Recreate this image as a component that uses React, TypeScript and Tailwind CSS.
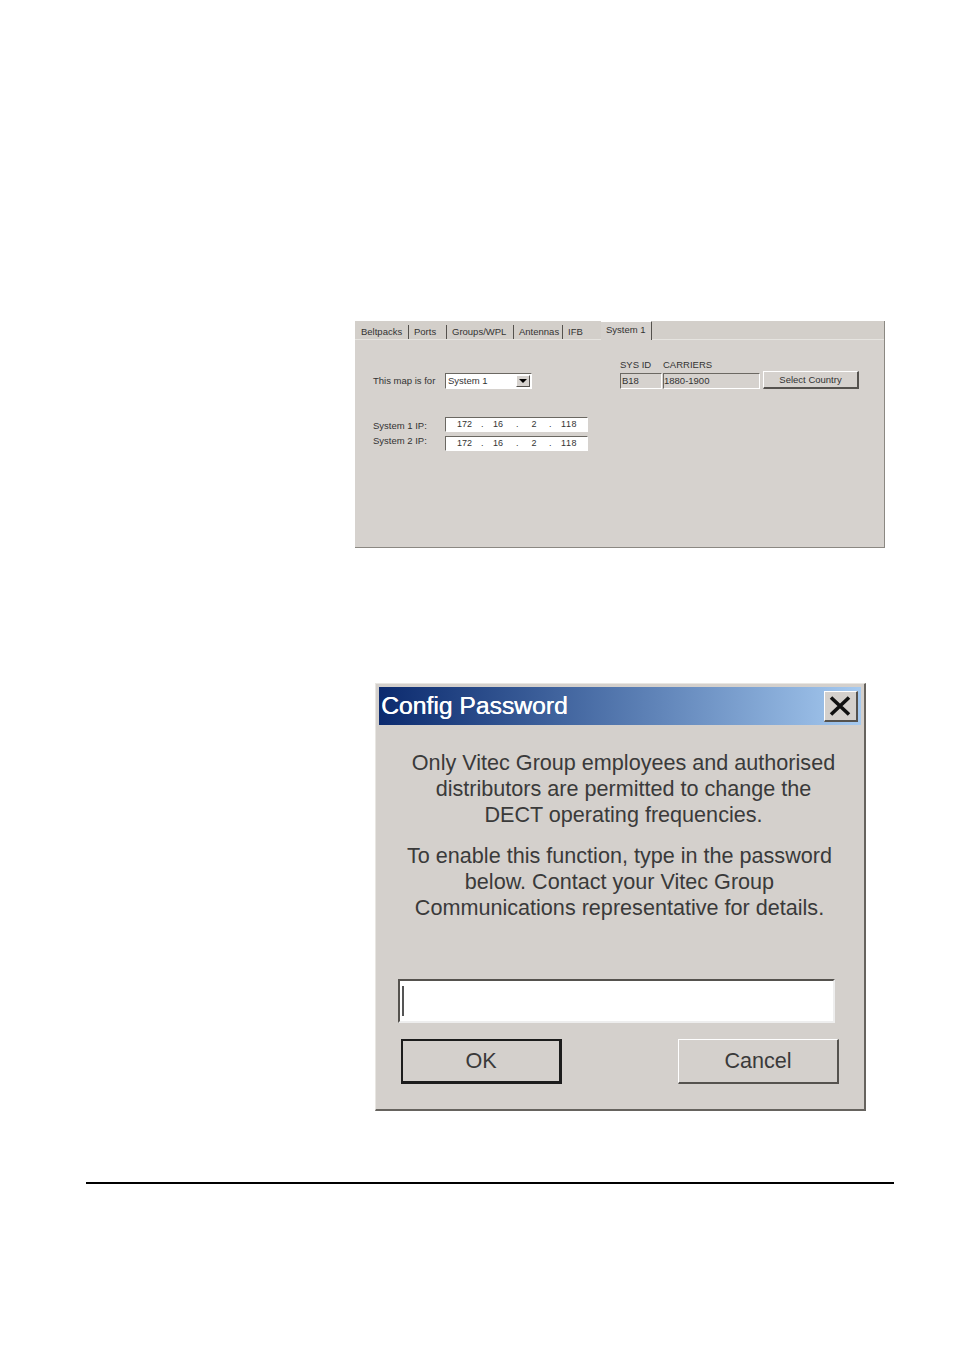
const raised = 'border border-t-white border-l-white border-r-[#55524e] border-b-[#55524e]'
const sunken = 'border border-t-[#6b6862] border-l-[#6b6862] border-r-white border-b-white'

const tabs = [
  { label: 'Beltpacks', width: 'w-[53px] border-r border-[#55524e]' },
  { label: 'Ports', width: 'w-[38px] border-r border-[#55524e]' },
  { label: 'Groups/WPL', width: 'w-[67px] border-r border-[#55524e]' },
  { label: 'Antennas', width: 'w-[49px] border-r border-[#55524e]' },
  { label: 'IFB', width: 'w-[38px]' },
]

function IpField() {
  return (
    <div className={`flex h-[15px] w-[143px] items-center bg-white pl-[11px] text-[9px] leading-none text-[#333] ${sunken}`}>
      <span className="w-[24px]">172</span>
      <span className="w-[12px]">.</span>
      <span className="w-[23px]">16</span>
      <span className="w-[12px]">.</span>
      <span className="w-[12px] text-center">2</span>
      <span className="w-[21px] pl-[9px]">.</span>
      <span className="tracking-[0.6px]">118</span>
    </div>
  )
}

function MapPanel() {
  return (
    <div className="ml-[355px] h-[227px] w-[530px] border-r border-b border-[#8b8882] bg-[#d6d2ce] font-['Liberation_Sans',sans-serif] text-[9.5px] text-[#333]">
      <div className="flex h-[19px] items-end border-b border-b-[#e6e4e0] bg-[#d3cfca] pl-[1px]">
        {tabs.map((tab) => (
          <div key={tab.label} className={`flex h-[14px] items-center pl-[5px] leading-none ${tab.width}`}>
            {tab.label}
          </div>
        ))}
        <div className="-mb-[1px] flex h-[19px] w-[51px] items-center self-start border-t border-r border-t-white border-r-[#55524e] bg-[#d6d2ce] pb-[2px] pl-[5px] leading-none">
          System 1
        </div>
      </div>

      <div className="flex pl-[18px]">
        <div className="w-[247px] pt-[33px]">
          <div className="flex h-[16px] items-center">
            <span className="w-[72px] leading-none">This map is for</span>
            <div className={`flex h-[16px] w-[87px] items-center justify-between bg-white pr-[1px] pl-[2px] ${sunken}`}>
              <span className="leading-none">System 1</span>
              <span className={`flex h-[12px] w-[14px] items-center justify-center bg-[#d6d2ce] ${raised}`}>
                <span className="h-0 w-0 border-x-[4px] border-t-[4px] border-x-transparent border-t-black" />
              </span>
            </div>
          </div>
          <div className="mt-[28px] flex items-start">
            <span className="w-[72px] pt-[4px] leading-none">System 1 IP:</span>
            <IpField />
          </div>
          <div className="mt-[4px] flex items-start">
            <span className="w-[72px] leading-none">System 2 IP:</span>
            <IpField />
          </div>
        </div>

        <div className="pt-[20px]">
          <div className="flex h-[13px] items-start leading-none">
            <span className="w-[43px]">SYS ID</span>
            <span>CARRIERS</span>
          </div>
          <div className="flex items-start">
            <div className={`flex h-[16px] w-[42px] items-center pl-[1px] leading-none ${sunken}`}>B18</div>
            <div className={`ml-[1px] flex h-[16px] w-[97px] items-center leading-none ${sunken}`}>1880-1900</div>
            <div className={`ml-[3px] -mt-[2px] flex h-[18px] w-[96px] items-center justify-center leading-none border-b-2 border-r-2 ${raised}`}>
              Select Country
            </div>
          </div>
        </div>
      </div>
    </div>
  )
}

function PasswordDialog() {
  return (
    <div className="ml-[375px] flex h-[428px] w-[491px] flex-col border border-t-[#e8e6e2] border-l-[#e8e6e2] border-r-2 border-b-2 border-r-[#66635e] border-b-[#66635e] bg-[#d4d0cc] p-[3px] font-['Liberation_Sans',sans-serif]">
      <div className="flex h-[38px] shrink-0 items-center justify-between bg-gradient-to-r from-[#0c2a6e] to-[#a6caf0] pr-[3px] pl-[2px]">
        <span className="text-[24.7px] font-medium leading-none text-white [text-shadow:0.4px_0_0_white]">Config Password</span>
        <span className={`flex h-[31px] w-[34px] items-center justify-center bg-[#d4d0cc] border-r-2 border-b-2 pr-[2px] ${raised}`}>
          <svg width="22" height="20" viewBox="0 0 22 20">
            <path d="M2 1.5 L20 18.5 M20 1.5 L2 18.5" stroke="#111" strokeWidth="3.6" fill="none" />
          </svg>
        </span>
      </div>

      <div className="pt-[25px] pl-[5px] text-center text-[21.6px] leading-[26px] text-[#3a3a3a]">
        <p className="pl-[2px]">
          Only Vitec Group employees and authorised
          <br />
          distributors are permitted to change the
          <br />
          DECT operating frequencies.
        </p>
        <p className="mt-[15px] pr-[6px]">
          To enable this function, type in the password
          <br />
          below. Contact your Vitec Group
          <br />
          Communications representative for details.
        </p>
      </div>

      <div className="mt-[58px] ml-[19px] flex h-[44px] w-[437px] items-center border-2 border-t-[#55524e] border-l-[#55524e] border-r-[#eeeeee] border-b-[#eeeeee] bg-white pl-[2px]">
        <span className="h-[30px] w-[2px] bg-[#555]" />
      </div>

      <div className="mt-[16px] ml-[22px] flex w-[438px] justify-between text-[21.6px] leading-none text-[#3a3a3a]">
        <div className="flex h-[45px] w-[161px] items-center justify-center border-2 border-[#1c1c1c] border-r-[3px] border-b-[3px]">OK</div>
        <div className="flex h-[45px] w-[161px] items-center justify-center border border-t-white border-l-white border-r-2 border-b-2 border-r-[#55524e] border-b-[#55524e]">Cancel</div>
      </div>
    </div>
  )
}

export default function App() {
  return (
    <div className="h-[1350px] w-[954px] bg-white pt-[321px]">
      <MapPanel />
      <div className="h-[135px]" />
      <PasswordDialog />
      <div className="mt-[71px] ml-[86px] h-[2px] w-[808px] bg-black" />
    </div>
  )
}
